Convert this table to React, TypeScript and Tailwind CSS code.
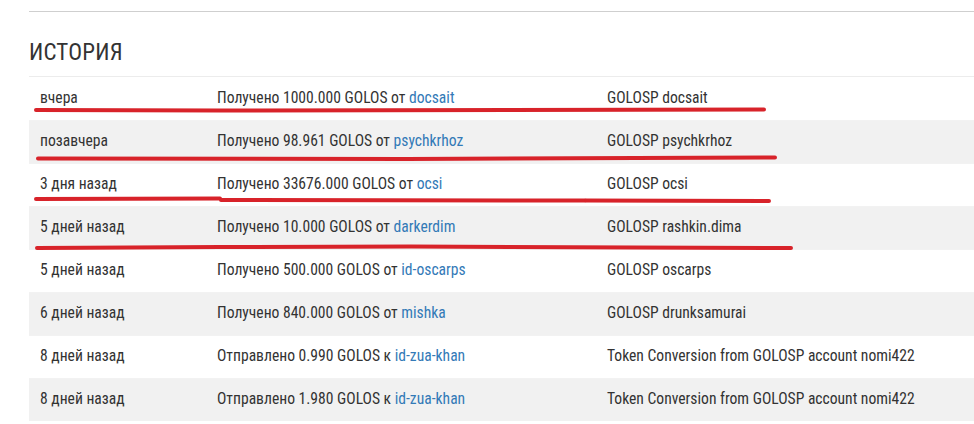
import React from "react";

type Row = {
  when: string;
  action: string;
  link: string;
  memo: string;
};

const rows: Row[] = [
  { when: "вчера", action: "Получено 1000.000 GOLOS от", link: "docsait", memo: "GOLOSP docsait" },
  { when: "позавчера", action: "Получено 98.961 GOLOS от", link: "psychkrhoz", memo: "GOLOSP psychkrhoz" },
  { when: "3 дня назад", action: "Получено 33676.000 GOLOS от", link: "ocsi", memo: "GOLOSP ocsi" },
  { when: "5 дней назад", action: "Получено 10.000 GOLOS от", link: "darkerdim", memo: "GOLOSP rashkin.dima" },
  { when: "5 дней назад", action: "Получено 500.000 GOLOS от", link: "id-oscarps", memo: "GOLOSP oscarps" },
  { when: "6 дней назад", action: "Получено 840.000 GOLOS от", link: "mishka", memo: "GOLOSP drunksamurai" },
  { when: "8 дней назад", action: "Отправлено 0.990 GOLOS к", link: "id-zua-khan", memo: "Token Conversion from GOLOSP account nomi422" },
  { when: "8 дней назад", action: "Отправлено 1.980 GOLOS к", link: "id-zua-khan", memo: "Token Conversion from GOLOSP account nomi422" },
];

const font = {
  fontFamily: '"Roboto Condensed", "Liberation Sans Narrow", "DejaVu Sans Condensed", Roboto, sans-serif',
};

export default function App() {
  return (
    <div className="relative w-[974px] h-[424px] overflow-hidden bg-white text-[#333]" style={font}>
      <div className="pl-[29px] pt-[11px]">
        <div className="h-px bg-[#cfcfcf]" />
        <h2 className="mt-[27px] text-[23px] leading-[28px] tracking-[0.2px]">ИСТОРИЯ</h2>
        <div className="mt-[9px] border-t border-[#ececec]">
          {rows.map((r, i) => (
            <div
              key={i}
              className={`flex items-center h-[43px] text-[15.6px] ${i % 2 === 1 ? "bg-[#f1f1f1]" : "bg-white"} ${i > 0 ? "border-t border-[#f2f2f2]" : ""}`}
            >
              <div className="w-[188px] pl-[11px] shrink-0">{r.when}</div>
              <div className="w-[390px] shrink-0">
                {r.action} <span className="text-[#337ab7]">{r.link}</span>
              </div>
              <div className="flex-1">{r.memo}</div>
            </div>
          ))}
        </div>
      </div>
      <svg className="absolute inset-0 pointer-events-none" width="974" height="424">
        <g stroke="#d8232a" strokeWidth="4" strokeLinecap="round" fill="none">
          <path d="M36 110 L220 110.5 L764 109.5" />
          <path d="M38 158.5 L407 159 L775 157.5" />
          <path d="M36 199 L220 198.5" />
          <path d="M221 200 L585 200.5" />
          <path d="M586 200.5 L769 201" />
          <path d="M37 248 L220 247 L411 246.5 L791 248" />
        </g>
      </svg>
    </div>
  );
}
